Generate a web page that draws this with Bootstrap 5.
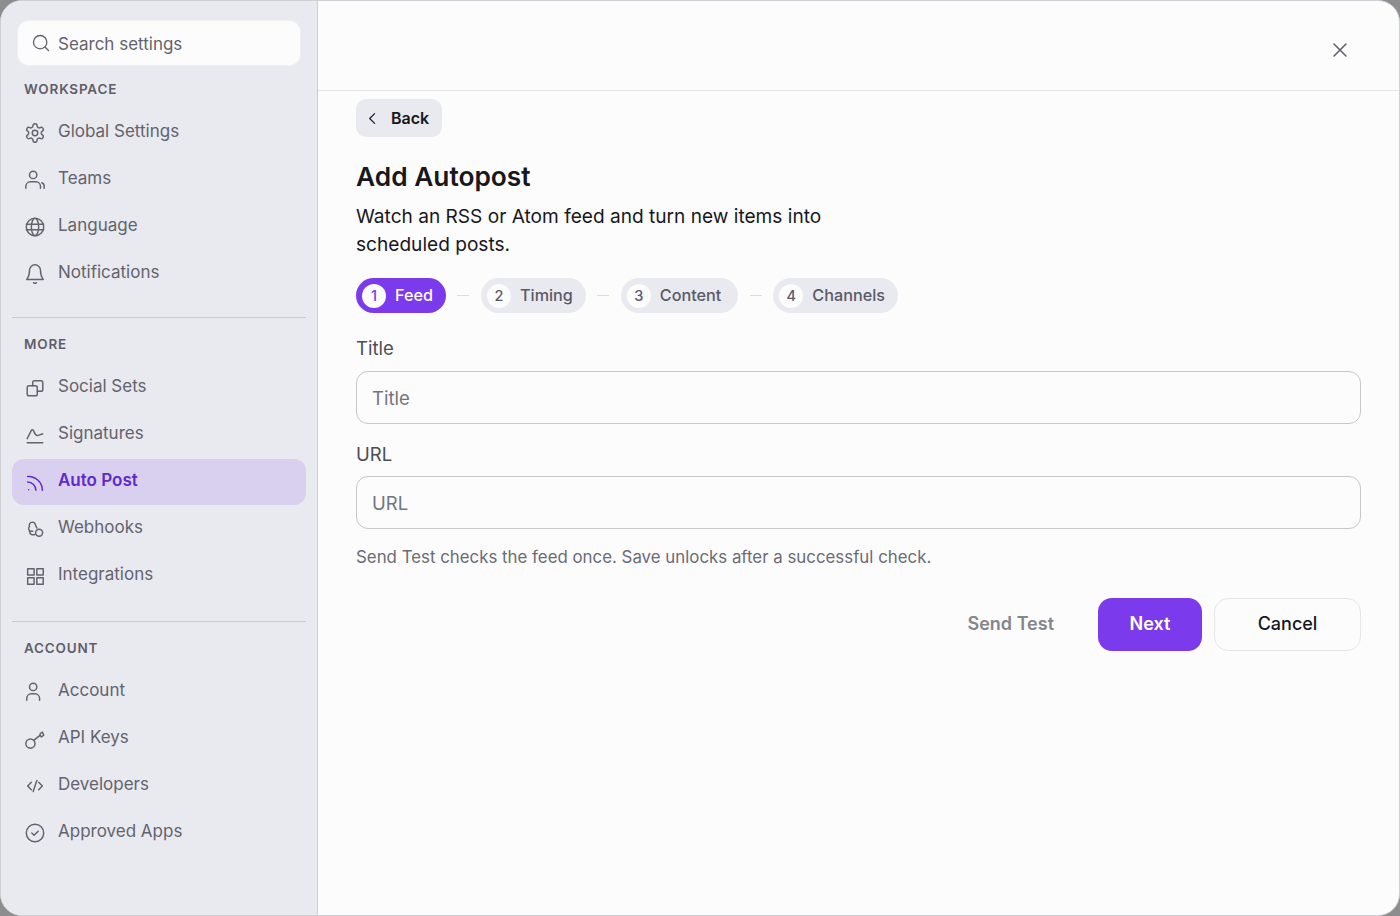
<!DOCTYPE html>
<html lang="en">
  <head>
    <meta charset="UTF-8" />
    <title>Add Autopost</title>
    <link href="https://cdn.jsdelivr.net/npm/bootstrap@5.3.2/dist/css/bootstrap.min.css" rel="stylesheet" />
    <style>
      body {
        background-color: #8d8d90;
        font-family: "Inter", "Liberation Sans", sans-serif;
        overflow: hidden;
      }
      svg.ico {
        fill: none;
        stroke: currentColor;
        stroke-width: 1.6;
        stroke-linecap: round;
        stroke-linejoin: round;
        flex-shrink: 0;
      }
      .shell {
        height: 916px;
        border: 1px solid #cfcfd6;
        border-radius: 22px;
        overflow: hidden;
        background-color: #fcfcfc;
      }
      .side {
        width: 317px;
        background-color: #e9e9f0;
        border-right: 1px solid #cdcdd4;
        padding: 20px 11px 0 11px;
      }
      .search-box {
        height: 44px;
        margin: 0 6px 14px 6px;
        padding: 3px 13px 0 13px;
        gap: 7px;
        background-color: #fcfcfc;
        border-radius: 11px;
        color: #63636e;
        font-size: 17px;
        box-shadow: 0 0 0 1px #f0f0f4;
      }
      .search-box svg {
        margin-top: -3px;
      }
      .side-label {
        height: 20px;
        line-height: 20px;
        margin: 0 0 11px 12px;
        font-size: 13.5px;
        font-weight: 600;
        letter-spacing: 0.06em;
        color: #5e5e69;
      }
      .side .nav {
        gap: 1px;
      }
      .side .nav-link {
        height: 46px;
        padding: 0 12px 2px 12px;
        gap: 12px;
        border-radius: 12px;
        color: #63636e;
        font-size: 17px;
      }
      .side .nav-link svg {
        margin-top: 1px;
      }
      .side .nav-link.active {
        background-color: #d9d0ef;
        color: #6029c9;
        font-weight: 600;
      }
      .side hr {
        margin: 20px 0 16px 0;
        border-color: #c9c9d1;
        opacity: 1;
      }
      .side hr.wide {
        margin-top: 22px;
      }
      .top-bar {
        height: 90px;
        padding: 8px 47px 0 0;
        border-bottom: 1px solid #e6e6ea;
      }
      .close-x {
        color: #62626d;
        padding: 0;
        border: 0;
        background: none;
      }
      .body-pane {
        padding: 8px 38px 0 38px;
      }
      .btn-back {
        height: 38px;
        width: 86px;
        padding: 0 0 0 8px;
        gap: 10px;
        background-color: #e9e9f0;
        border: 0;
        border-radius: 10px;
        color: #17171c;
        font-size: 16px;
        font-weight: 600;
      }
      .page-title {
        margin: 22px 0 7px 0;
        font-size: 26.3px;
        line-height: 36px;
        font-weight: 600;
        color: #17171c;
      }
      .lead-text {
        margin: 0 0 20px 0;
        max-width: 500px;
        font-size: 19.1px;
        line-height: 28px;
        color: #17171c;
      }
      .steps {
        margin-bottom: 22px;
      }
      .step {
        height: 35px;
        padding: 0 13px 0 6px;
        gap: 9px;
        background-color: #e9e9f0;
        border-radius: 18px;
        color: #5a5a66;
        font-size: 16.2px;
        font-weight: 500;
      }
      .step.step-roomy {
        padding-right: 17px;
      }
      .step.on {
        background-color: #7c3aed;
        color: #fff;
      }
      .step-num {
        width: 24px;
        height: 24px;
        background-color: #fcfcfc;
        border-radius: 50%;
        font-size: 14.5px;
        font-weight: 500;
      }
      .step.on .step-num {
        color: #7c3aed;
      }
      .step-dash {
        width: 12px;
        height: 1px;
        margin: 0 11.5px;
        background-color: #dcdce2;
      }
      .field-label {
        margin: 0 0 10px 0;
        font-size: 18.5px;
        line-height: 26px;
        color: #4d4d58;
      }
      .field-input + .field-label {
        padding-top: 1px;
        margin-bottom: 9px;
      }
      .field-input {
        height: 53px;
        padding: 0 15px;
        background-color: #fcfcfc;
        border: 1px solid #c6c6cb;
        border-radius: 12px;
        font-size: 18.5px;
      }
      .field-input::placeholder {
        color: #74747e;
      }
      .hint {
        margin: 16px 0 29px 0;
        font-size: 16.85px;
        line-height: 24px;
        color: #6b6b75;
      }
      .btn-act {
        height: 53px;
        border-radius: 14px;
        font-size: 18px;
        font-weight: 500;
        padding: 0 0 2px 0;
      }
      .btn-test {
        color: #85858b;
        border: 0;
        font-weight: 600;
        margin-right: 44px;
        background: none;
      }
      .btn-next {
        width: 104px;
        background-color: #7c3aed;
        border: 0;
        color: #fff;
        font-weight: 600;
        margin-right: 12px;
      }
      .btn-cancel {
        width: 147px;
        background-color: #fcfcfc;
        border: 1px solid #e6e6ea;
        color: #17171c;
      }
    </style>
  </head>

  <body>
    <div class="shell d-flex">
      <aside class="side flex-shrink-0">
        <div class="search-box d-flex align-items-center">
          <svg class="ico" width="20" height="20" viewBox="0 0 24 24"><circle cx="11" cy="11" r="8"/><path d="m21 21-4.300-4.300"/></svg>
          <span>Search settings</span>
        </div>

        <div class="side-label">WORKSPACE</div>
        <nav class="nav flex-column">
          <a class="nav-link d-flex align-items-center" href="#">
            <svg class="ico" width="22" height="22" viewBox="0 0 24 24"><path d="M12.22 2h-.44a2 2 0 0 0-2 2v.18a2 2 0 0 1-1 1.73l-.43.25a2 2 0 0 1-2 0l-.15-.08a2 2 0 0 0-2.73.73l-.22.38a2 2 0 0 0 .73 2.73l.15.1a2 2 0 0 1 1 1.72v.51a2 2 0 0 1-1 1.74l-.15.09a2 2 0 0 0-.73 2.73l.22.38a2 2 0 0 0 2.73.73l.15-.08a2 2 0 0 1 2 0l.43.25a2 2 0 0 1 1 1.73V20a2 2 0 0 0 2 2h.44a2 2 0 0 0 2-2v-.18a2 2 0 0 1 1-1.73l.43-.25a2 2 0 0 1 2 0l.15.08a2 2 0 0 0 2.73-.73l.22-.39a2 2 0 0 0-.73-2.73l-.15-.08a2 2 0 0 1-1-1.74v-.5a2 2 0 0 1 1-1.74l.15-.09a2 2 0 0 0 .73-2.73l-.22-.38a2 2 0 0 0-2.73-.73l-.15.08a2 2 0 0 1-2 0l-.43-.25a2 2 0 0 1-1-1.73V4a2 2 0 0 0-2-2z"/><circle cx="12" cy="12" r="3"/></svg>
            Global Settings
          </a>
          <a class="nav-link d-flex align-items-center" href="#">
            <svg class="ico" width="22" height="22" viewBox="0 0 24 24"><circle cx="10" cy="6.500" r="4"/><path d="M2 21v-2a5 5 0 0 1 5-5h6a5 5 0 0 1 5 5v2"/><path d="M19.500 15a4 4 0 0 1 2.500 4v2"/></svg>
            Teams
          </a>
          <a class="nav-link d-flex align-items-center" href="#">
            <svg class="ico" width="22" height="22" viewBox="0 0 24 24"><circle cx="12" cy="12" r="9.500"/><ellipse cx="12" cy="12" rx="4" ry="9.500"/><path d="M2.500 9h19M2.500 15h19"/></svg>
            Language
          </a>
          <a class="nav-link d-flex align-items-center" href="#">
            <svg class="ico" width="22" height="22" viewBox="0 0 24 24"><path d="M6 8a6 6 0 0 1 12 0c0 7 2 8.500 3 10H3c1-1.500 3-3 3-10"/><path d="M10.500 21.500a2 2 0 0 0 3 0"/></svg>
            Notifications
          </a>
        </nav>

        <hr />
        <div class="side-label">MORE</div>
        <nav class="nav flex-column">
          <a class="nav-link d-flex align-items-center" href="#">
            <svg class="ico" width="22" height="22" viewBox="0 0 24 24"><rect x="3.500" y="9.500" width="11" height="11" rx="2"/><path d="M9.500 9.500V6a2 2 0 0 1 2-2H18.500a2 2 0 0 1 2 2v7.500a2 2 0 0 1-2 2h-4"/></svg>
            Social Sets
          </a>
          <a class="nav-link d-flex align-items-center" href="#">
            <svg class="ico" width="22" height="22" viewBox="0 0 24 24"><path d="M3.500 16 8 7c.6-1 1.600-1 2.200 0 1.300 2.600 2 5.500 4.300 5.500 1.800 0 3-1 6-1.500"/><path d="M3.500 20.500h17"/></svg>
            Signatures
          </a>
          <a class="nav-link active d-flex align-items-center" href="#">
            <svg class="ico" width="22" height="22" viewBox="0 0 24 24"><path d="M4 12a9 9 0 0 1 9 9"/><path d="M4 6a15 15 0 0 1 16 15"/><path d="M5 20.500h.01"/></svg>
            Auto Post
          </a>
          <a class="nav-link d-flex align-items-center" href="#">
            <svg class="ico" width="22" height="22" viewBox="0 0 24 24"><path d="M9.500 14.500H8a3 3 0 0 1-2-5.200 3.500 3.500 0 0 1 3-4.800c1.800 0 3.200 1.200 3.500 3 .4 1.300 1 2.300 1.500 3.500"/><path d="M6 14.500c.4 3 2.600 4.500 6 3.500"/><circle cx="16.500" cy="16" r="3.800"/></svg>
            Webhooks
          </a>
          <a class="nav-link d-flex align-items-center" href="#">
            <svg class="ico" width="22" height="22" viewBox="0 0 24 24"><rect x="4" y="4" width="7" height="7"/><rect x="14" y="4" width="7" height="7"/><rect x="4" y="14" width="7" height="7"/><rect x="14" y="14" width="7" height="7"/></svg>
            Integrations
          </a>
        </nav>

        <hr class="wide" />
        <div class="side-label">ACCOUNT</div>
        <nav class="nav flex-column">
          <a class="nav-link d-flex align-items-center" href="#">
            <svg class="ico" width="22" height="22" viewBox="0 0 24 24"><circle cx="10" cy="6.500" r="4"/><path d="M3 21v-2a5 5 0 0 1 5-5h4a5 5 0 0 1 5 5v2"/></svg>
            Account
          </a>
          <a class="nav-link d-flex align-items-center" href="#">
            <svg class="ico" width="22" height="22" viewBox="0 0 24 24"><circle cx="7" cy="17" r="5"/><path d="m10.500 13.500 7-5.500"/><path d="m17.500 8 1.500 1.800 2.500-2-1.500-3.300-2.300 1.500z"/></svg>
            API Keys
          </a>
          <a class="nav-link d-flex align-items-center" href="#">
            <svg class="ico" width="22" height="22" viewBox="0 0 24 24"><path d="m8 8-4 4 4 4M16 8l4 4-4 4M14 6l-4 12"/></svg>
            Developers
          </a>
          <a class="nav-link d-flex align-items-center" href="#">
            <svg class="ico" width="22" height="22" viewBox="0 0 24 24"><circle cx="12" cy="12" r="9.500"/><path d="m8.500 12 2.500 2.500 4.500-4.500"/></svg>
            Approved Apps
          </a>
        </nav>
      </aside>

      <main class="flex-grow-1">
        <div class="top-bar d-flex align-items-center justify-content-end">
          <button class="close-x d-flex" type="button" aria-label="Close">
            <svg class="ico" width="24" height="24" viewBox="0 0 24 24"><path d="M18 6 6 18M6 6l12 12"/></svg>
          </button>
        </div>
        <div class="body-pane">
          <button class="btn btn-back d-flex align-items-center" type="button">
            <svg class="ico" width="17" height="17" viewBox="0 0 24 24" stroke-width="2.600"><path d="m15 5-7 7 7 7"/></svg>
            Back
          </button>
          <h1 class="page-title">Add Autopost</h1>
          <p class="lead-text">Watch an RSS or Atom feed and turn new items into scheduled posts.</p>

          <div class="steps d-flex align-items-center">
            <div class="step on d-flex align-items-center"><span class="step-num d-flex align-items-center justify-content-center">1</span>Feed</div>
            <span class="step-dash"></span>
            <div class="step d-flex align-items-center"><span class="step-num d-flex align-items-center justify-content-center">2</span>Timing</div>
            <span class="step-dash"></span>
            <div class="step step-roomy d-flex align-items-center"><span class="step-num d-flex align-items-center justify-content-center">3</span>Content</div>
            <span class="step-dash"></span>
            <div class="step d-flex align-items-center"><span class="step-num d-flex align-items-center justify-content-center">4</span>Channels</div>
          </div>

          <label class="field-label d-block" for="title">Title</label>
          <input class="form-control field-input mb-3" id="title" type="text" placeholder="Title" />
          <label class="field-label d-block" for="url">URL</label>
          <input class="form-control field-input" id="url" type="text" placeholder="URL" />
          <p class="hint">Send Test checks the feed once. Save unlocks after a successful check.</p>

          <div class="d-flex justify-content-end">
            <button class="btn btn-act btn-test" type="button">Send Test</button>
            <button class="btn btn-act btn-next" type="button">Next</button>
            <button class="btn btn-act btn-cancel" type="button">Cancel</button>
          </div>
        </div>
      </main>
    </div>
    <script src="https://cdn.jsdelivr.net/npm/bootstrap@5.3.2/dist/js/bootstrap.bundle.min.js"></script>
  </body>
</html>
